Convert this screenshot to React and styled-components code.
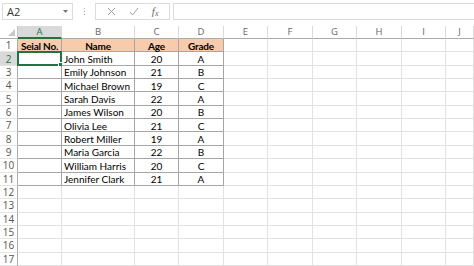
import React from 'react';
import styled, { createGlobalStyle } from 'styled-components';

const GlobalStyle = createGlobalStyle`
  html, body {
    margin: 0;
    padding: 0;
    background: #ffffff;
    overflow: hidden;
  }
`;

const Page = styled.div`
  width: 474px;
  height: 266px;
  background: #ffffff;
  font-family: 'Open Sans', sans-serif;
`;

const FormulaBar = styled.div`
  height: 26px;
  display: flex;
  align-items: flex-start;
  padding-top: 3px;
  box-sizing: border-box;
`;

const NameBox = styled.div`
  width: 71px;
  height: 17px;
  margin-left: 2px;
  box-sizing: border-box;
  border: 1px solid #dcdcdc;
  display: flex;
  align-items: center;
  justify-content: space-between;
  padding: 0 4px 0 4px;
  font-size: 11px;
  color: #333;
`;

const Dots = styled.div`
  width: 22px;
  height: 17px;
  display: flex;
  flex-direction: column;
  align-items: center;
  justify-content: center;
  gap: 2px;
  & span {
    width: 1px;
    height: 1px;
    background: #a8a8a8;
  }
`;

const FxGroup = styled.div`
  width: 75px;
  height: 17px;
  box-sizing: border-box;
  border: 1px solid #dcdcdc;
  display: flex;
  align-items: center;
  justify-content: space-around;
  padding: 0 4px;
`;

const FxLabel = styled.span`
  font-family: 'Liberation Serif', serif;
  font-style: italic;
  font-size: 11px;
  color: #666;
  & sub {
    font-size: 8px;
    vertical-align: -1px;
  }
`;

const FormulaInput = styled.div`
  flex: 1;
  height: 17px;
  margin-left: 3px;
  box-sizing: border-box;
  border: 1px solid #dcdcdc;
  border-right: none;
`;

const Sheet = styled.div`
  display: grid;
  grid-template-columns: 18px 44px 73px 44px 45px 44px 45px 44px 45px 44px 1fr;
  grid-template-rows: 13px repeat(17, 1fr);
  height: 240px;
`;

const Corner = styled.div`
  box-sizing: border-box;
  border-right: 1px solid #c6c6c6;
  border-bottom: 1px solid #ababab;
  display: flex;
  align-items: flex-end;
  justify-content: flex-end;
  padding: 0 2px 2px 0;
`;

const ColHeader = styled.div`
  box-sizing: border-box;
  border-right: 1px solid #dadada;
  border-bottom: ${p => (p.$active ? '2px solid #217346' : '1px solid #ababab')};
  background: ${p => (p.$active ? '#d9d9d9' : '#ffffff')};
  color: ${p => (p.$active ? '#217346' : '#666')};
  font-size: 9.5px;
  display: flex;
  align-items: center;
  justify-content: center;
  line-height: 1;
`;

const RowHeader = styled.div`
  box-sizing: border-box;
  border-right: 1px solid #ababab;
  border-bottom: 1px solid #e4e4e4;
  background: ${p => (p.$active ? '#d9d9d9' : '#ffffff')};
  color: ${p => (p.$active ? '#217346' : '#555')};
  font-size: 10px;
  display: flex;
  align-items: center;
  justify-content: center;
  line-height: 1;
`;

const Cell = styled.div`
  position: relative;
  box-sizing: border-box;
  border-right: 1px solid ${p => (p.$boxed ? '#a6a6a6' : '#e2e2e2')};
  border-bottom: 1px solid ${p => (p.$boxed ? '#a6a6a6' : '#e2e2e2')};
  background: ${p => (p.$head ? '#f8cbad' : '#ffffff')};
  font-family: Lato, 'Liberation Sans', sans-serif;
  font-size: 10px;
  font-weight: ${p => (p.$head ? 700 : 400)};
  letter-spacing: ${p => (p.$head ? '-0.2px' : '0')};
  color: #000;
  display: flex;
  align-items: center;
  justify-content: ${p => (p.$align === 'left' ? 'flex-start' : 'center')};
  padding: 1px 2px 0;
  white-space: nowrap;
  line-height: 1;
`;

const Selection = styled.div`
  position: absolute;
  left: -1px;
  top: -1px;
  right: -1px;
  bottom: -1px;
  border: 2px solid #217346;
  pointer-events: none;
  &::after {
    content: '';
    position: absolute;
    right: -4px;
    bottom: -4px;
    width: 4px;
    height: 4px;
    background: #217346;
    border: 1px solid #ffffff;
  }
`;

const columns = ['A', 'B', 'C', 'D', 'E', 'F', 'G', 'H', 'I', 'J'];

const people = [
  ['John Smith', 20, 'A'],
  ['Emily Johnson', 21, 'B'],
  ['Michael Brown', 19, 'C'],
  ['Sarah Davis', 22, 'A'],
  ['James Wilson', 20, 'B'],
  ['Olivia Lee', 21, 'C'],
  ['Robert Miller', 19, 'A'],
  ['Maria Garcia', 22, 'B'],
  ['William Harris', 20, 'C'],
  ['Jennifer Clark', 21, 'A'],
];

const headings = ['Seial No.', 'Name', 'Age', 'Grade'];

function rowValues(r) {
  if (r === 1) return headings;
  const p = people[r - 2];
  return p ? ['', p[0], p[1], p[2]] : [];
}

export default function App() {
  const rows = Array.from({ length: 17 }, (_, i) => i + 1);

  return (
    <Page>
      <GlobalStyle />
      <FormulaBar>
        <NameBox>
          <span>A2</span>
          <svg width="5" height="3" viewBox="0 0 5 3">
            <path d="M0 0 L5 0 L2.5 3 Z" fill="#777" />
          </svg>
        </NameBox>
        <Dots>
          <span />
          <span />
          <span />
        </Dots>
        <FxGroup>
          <svg width="9" height="9" viewBox="0 0 9 9">
            <path d="M1 1 L8 8 M8 1 L1 8" stroke="#a0a0a0" strokeWidth="1" fill="none" />
          </svg>
          <svg width="10" height="9" viewBox="0 0 10 9">
            <path d="M1 5 L3.5 8 L9 1" stroke="#a0a0a0" strokeWidth="1" fill="none" />
          </svg>
          <FxLabel>f<sub>x</sub></FxLabel>
        </FxGroup>
        <FormulaInput />
      </FormulaBar>

      <Sheet>
        <Corner>
          <svg width="7" height="7" viewBox="0 0 7 7">
            <path d="M7 0 L7 7 L0 7 Z" fill="#c8c8c8" />
          </svg>
        </Corner>
        {columns.map(c => (
          <ColHeader key={c} $active={c === 'A'}>{c}</ColHeader>
        ))}

        {rows.map(r => {
          const vals = rowValues(r);
          return (
            <React.Fragment key={r}>
              <RowHeader $active={r === 2}>{r}</RowHeader>
              {columns.map((c, ci) => {
                const inTable = r <= 11 && ci < 4;
                return (
                  <Cell
                    key={c}
                    $boxed={inTable}
                    $head={r === 1 && ci < 4}
                    $align={r > 1 && ci === 1 ? 'left' : 'center'}
                  >
                    {inTable ? vals[ci] : null}
                    {r === 2 && ci === 0 && <Selection />}
                  </Cell>
                );
              })}
            </React.Fragment>
          );
        })}
      </Sheet>
    </Page>
  );
}
